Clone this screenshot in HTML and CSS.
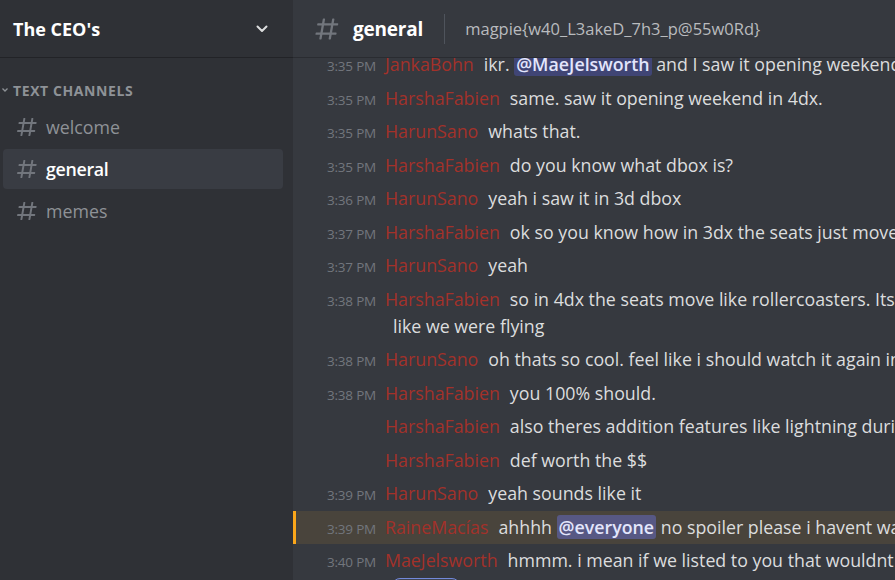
FILE: index.html
```html
<!DOCTYPE html>
<html>
<head>
<meta charset="utf-8">
<link rel="stylesheet" href="styles.css">
</head>
<body>
<div class="app">
  <aside class="sidebar">
    <div class="guild-header">
      <span class="guild-name">The CEO's</span>
      <svg class="chev" width="18" height="18" viewBox="0 0 18 18"><path d="M4.5 6.5 L9 11 L13.5 6.5" fill="none" stroke="#dcddde" stroke-width="2" stroke-linecap="round" stroke-linejoin="round"/></svg>
    </div>
    <div class="category">
      <svg class="cat-chev" width="8" height="8" viewBox="0 0 8 8"><path d="M1.5 2.5 L4 5 L6.5 2.5" fill="none" stroke="#8e9297" stroke-width="1.3"/></svg>
      <span>Text Channels</span>
    </div>
    <div class="channel"><svg class="hash" width="24" height="24" viewBox="0 0 24 24"><path fill="currentColor" fill-rule="evenodd" d="M5.88657 21C5.57547 21 5.3399 20.7189 5.39427 20.4126L6.00001 17H2.59511C2.28449 17 2.04905 16.7198 2.10259 16.4138L2.27759 15.4138C2.31946 15.1746 2.52722 15 2.77011 15H6.35001L7.41001 9H4.00511C3.69449 9 3.45905 8.71977 3.51259 8.41381L3.68759 7.41381C3.72946 7.17456 3.93722 7 4.18011 7H7.76001L8.39677 3.41262C8.43914 3.17391 8.64664 3 8.88907 3H9.87344C10.1845 3 10.4201 3.28107 10.3657 3.58738L9.76001 7H15.76L16.3968 3.41262C16.4391 3.17391 16.6466 3 16.8891 3H17.8734C18.1845 3 18.4201 3.28107 18.3657 3.58738L17.76 7H21.1649C21.4755 7 21.711 7.28023 21.6574 7.58619L21.4824 8.58619C21.4406 8.82544 21.2328 9 20.9899 9H17.41L16.35 15H19.7549C20.0655 15 20.301 15.2802 20.2474 15.5862L20.0724 16.5862C20.0306 16.8254 19.8228 17 19.5799 17H16L15.3632 20.5874C15.3209 20.8261 15.1134 21 14.8709 21H13.8866C13.5755 21 13.3399 20.7189 13.3943 20.4126L14 17H8.00001L7.36325 20.5874C7.32088 20.8261 7.11337 21 6.87094 21H5.88657ZM9.41045 9L8.35045 15H14.3504L15.4104 9H9.41045Z"/></svg><span>welcome</span></div>
    <div class="channel active"><svg class="hash" width="24" height="24" viewBox="0 0 24 24"><path fill="currentColor" fill-rule="evenodd" d="M5.88657 21C5.57547 21 5.3399 20.7189 5.39427 20.4126L6.00001 17H2.59511C2.28449 17 2.04905 16.7198 2.10259 16.4138L2.27759 15.4138C2.31946 15.1746 2.52722 15 2.77011 15H6.35001L7.41001 9H4.00511C3.69449 9 3.45905 8.71977 3.51259 8.41381L3.68759 7.41381C3.72946 7.17456 3.93722 7 4.18011 7H7.76001L8.39677 3.41262C8.43914 3.17391 8.64664 3 8.88907 3H9.87344C10.1845 3 10.4201 3.28107 10.3657 3.58738L9.76001 7H15.76L16.3968 3.41262C16.4391 3.17391 16.6466 3 16.8891 3H17.8734C18.1845 3 18.4201 3.28107 18.3657 3.58738L17.76 7H21.1649C21.4755 7 21.711 7.28023 21.6574 7.58619L21.4824 8.58619C21.4406 8.82544 21.2328 9 20.9899 9H17.41L16.35 15H19.7549C20.0655 15 20.301 15.2802 20.2474 15.5862L20.0724 16.5862C20.0306 16.8254 19.8228 17 19.5799 17H16L15.3632 20.5874C15.3209 20.8261 15.1134 21 14.8709 21H13.8866C13.5755 21 13.3399 20.7189 13.3943 20.4126L14 17H8.00001L7.36325 20.5874C7.32088 20.8261 7.11337 21 6.87094 21H5.88657ZM9.41045 9L8.35045 15H14.3504L15.4104 9H9.41045Z"/></svg><span>general</span></div>
    <div class="channel"><svg class="hash" width="24" height="24" viewBox="0 0 24 24"><path fill="currentColor" fill-rule="evenodd" d="M5.88657 21C5.57547 21 5.3399 20.7189 5.39427 20.4126L6.00001 17H2.59511C2.28449 17 2.04905 16.7198 2.10259 16.4138L2.27759 15.4138C2.31946 15.1746 2.52722 15 2.77011 15H6.35001L7.41001 9H4.00511C3.69449 9 3.45905 8.71977 3.51259 8.41381L3.68759 7.41381C3.72946 7.17456 3.93722 7 4.18011 7H7.76001L8.39677 3.41262C8.43914 3.17391 8.64664 3 8.88907 3H9.87344C10.1845 3 10.4201 3.28107 10.3657 3.58738L9.76001 7H15.76L16.3968 3.41262C16.4391 3.17391 16.6466 3 16.8891 3H17.8734C18.1845 3 18.4201 3.28107 18.3657 3.58738L17.76 7H21.1649C21.4755 7 21.711 7.28023 21.6574 7.58619L21.4824 8.58619C21.4406 8.82544 21.2328 9 20.9899 9H17.41L16.35 15H19.7549C20.0655 15 20.301 15.2802 20.2474 15.5862L20.0724 16.5862C20.0306 16.8254 19.8228 17 19.5799 17H16L15.3632 20.5874C15.3209 20.8261 15.1134 21 14.8709 21H13.8866C13.5755 21 13.3399 20.7189 13.3943 20.4126L14 17H8.00001L7.36325 20.5874C7.32088 20.8261 7.11337 21 6.87094 21H5.88657ZM9.41045 9L8.35045 15H14.3504L15.4104 9H9.41045Z"/></svg><span>memes</span></div>
  </aside>
  <main class="main">
    <header class="chat-header">
      <svg class="hash big" width="24" height="24" viewBox="0 0 24 24"><path fill="currentColor" fill-rule="evenodd" d="M5.88657 21C5.57547 21 5.3399 20.7189 5.39427 20.4126L6.00001 17H2.59511C2.28449 17 2.04905 16.7198 2.10259 16.4138L2.27759 15.4138C2.31946 15.1746 2.52722 15 2.77011 15H6.35001L7.41001 9H4.00511C3.69449 9 3.45905 8.71977 3.51259 8.41381L3.68759 7.41381C3.72946 7.17456 3.93722 7 4.18011 7H7.76001L8.39677 3.41262C8.43914 3.17391 8.64664 3 8.88907 3H9.87344C10.1845 3 10.4201 3.28107 10.3657 3.58738L9.76001 7H15.76L16.3968 3.41262C16.4391 3.17391 16.6466 3 16.8891 3H17.8734C18.1845 3 18.4201 3.28107 18.3657 3.58738L17.76 7H21.1649C21.4755 7 21.711 7.28023 21.6574 7.58619L21.4824 8.58619C21.4406 8.82544 21.2328 9 20.9899 9H17.41L16.35 15H19.7549C20.0655 15 20.301 15.2802 20.2474 15.5862L20.0724 16.5862C20.0306 16.8254 19.8228 17 19.5799 17H16L15.3632 20.5874C15.3209 20.8261 15.1134 21 14.8709 21H13.8866C13.5755 21 13.3399 20.7189 13.3943 20.4126L14 17H8.00001L7.36325 20.5874C7.32088 20.8261 7.11337 21 6.87094 21H5.88657ZM9.41045 9L8.35045 15H14.3504L15.4104 9H9.41045Z"/></svg>
      <span class="chan-title">general</span>
      <span class="divider"></span>
      <span class="topic">magpie{w40_L3akeD_7h3_p@55w0Rd}</span>
    </header>
    <div class="messages">
      <div class="msg"><span class="ts">3:35 PM</span><span class="name">JankaBohn</span><span class="text">ikr. <span class="mention">@MaeJelsworth</span> and I saw it opening weekend</span></div>
      <div class="msg"><span class="ts">3:35 PM</span><span class="name">HarshaFabien</span><span class="text">same. saw it opening weekend in 4dx.</span></div>
      <div class="msg"><span class="ts">3:35 PM</span><span class="name">HarunSano</span><span class="text">whats that.</span></div>
      <div class="msg"><span class="ts">3:35 PM</span><span class="name">HarshaFabien</span><span class="text">do you know what dbox is?</span></div>
      <div class="msg"><span class="ts">3:36 PM</span><span class="name">HarunSano</span><span class="text">yeah i saw it in 3d dbox</span></div>
      <div class="msg"><span class="ts">3:37 PM</span><span class="name">HarshaFabien</span><span class="text">ok so you know how in 3dx the seats just move</span></div>
      <div class="msg"><span class="ts">3:37 PM</span><span class="name">HarunSano</span><span class="text">yeah</span></div>
      <div class="msg"><span class="ts">3:38 PM</span><span class="name">HarshaFabien</span><span class="text">so in 4dx the seats move like rollercoasters. Its<br>like we were flying</span></div>
      <div class="msg"><span class="ts">3:38 PM</span><span class="name">HarunSano</span><span class="text">oh thats so cool. feel like i should watch it again in</span></div>
      <div class="msg"><span class="ts">3:38 PM</span><span class="name">HarshaFabien</span><span class="text">you 100% should.</span></div>
      <div class="msg"><span class="ts"></span><span class="name">HarshaFabien</span><span class="text">also theres addition features like lightning during</span></div>
      <div class="msg"><span class="ts"></span><span class="name">HarshaFabien</span><span class="text">def worth the $$</span></div>
      <div class="msg"><span class="ts">3:39 PM</span><span class="name">HarunSano</span><span class="text">yeah sounds like it</span></div>
      <div class="msg highlight"><span class="ts">3:39 PM</span><span class="name">RaineMacías</span><span class="text">ahhhh <span class="mention strong">@everyone</span> no spoiler please i havent wa</span></div>
      <div class="msg"><span class="ts">3:40 PM</span><span class="name">MaeJelsworth</span><span class="text">hmmm. i mean if we listed to you that wouldnt</span></div>
      <div class="reactions"><span class="reaction"></span></div>
    </div>
  </main>
</div>
</body>
</html>
```
FILE: styles.css
```css
* { box-sizing: border-box; }
html, body { margin: 0; padding: 0; }
body {
  width: 895px;
  height: 580px;
  overflow: hidden;
  background: #36393f;
  font-family: "Open Sans", "Noto Sans", sans-serif;
}
.app {
  display: flex;
  height: 580px;
}
.sidebar {
  width: 293px;
  flex: none;
  background: #2f3136;
  display: flex;
  flex-direction: column;
}
.guild-header {
  height: 58px;
  display: flex;
  align-items: center;
  padding: 0 22px 0 13px;
  border-bottom: 1px solid #222327;
}
.guild-name {
  flex: 1;
  color: #ffffff;
  font-size: 18px;
  font-weight: 700;
}
.chev { display: block; }
.category {
  display: flex;
  align-items: center;
  margin-top: 23px;
  height: 18px;
  padding-left: 1px;
  color: #8e9297;
  font-size: 14px;
  font-weight: 700;
  text-transform: uppercase;
  letter-spacing: 0.6px;
}
.cat-chev { margin-right: 4px; }
.channel {
  display: flex;
  align-items: center;
  height: 40px;
  margin: 0 10px 2px 3px;
  padding-left: 12px;
  border-radius: 4px;
  color: #8e9297;
  font-size: 17.8px;
}
.category + .channel { margin-top: 8px; }
.channel .hash {
  width: 24px;
  height: 24px;
  color: #72767d;
  margin-right: 7px;
}
.channel.active {
  background: #393c43;
  color: #ffffff;
  font-weight: 600;
  letter-spacing: -0.3px;
}
.main {
  flex: 1;
  min-width: 0;
  display: flex;
  flex-direction: column;
  overflow: hidden;
}
.chat-header {
  height: 58px;
  flex: none;
  display: flex;
  align-items: center;
  padding-left: 20px;
  border-bottom: 1px solid #2a2c31;
  position: relative;
  z-index: 1;
  background: #36393f;
}
.chat-header .hash {
  width: 28px;
  height: 28px;
  color: #72767d;
  margin-right: 12px;
}
.chan-title {
  color: #ffffff;
  font-size: 19px;
  font-weight: 700;
  letter-spacing: -0.2px;
}
.divider {
  width: 1px;
  height: 30px;
  background: #4f545c;
  margin: 0 20px 0 21px;
}
.topic {
  color: #b9bbbe;
  font-size: 16.5px;
  white-space: nowrap;
}
.messages {
  margin-top: -10px;
  display: flex;
  flex-direction: column;
}
.msg {
  padding: 3px 0 3.5px 100px;
  text-indent: -72px;
  line-height: 27px;
  white-space: nowrap;
  font-size: 17.8px;
  color: #dcddde;
}
.ts {
  display: inline-block;
  width: 55px;
  line-height: 1;
  text-indent: 0;
  text-align: right;
  font-size: 13.5px;
  letter-spacing: -0.2px;
  color: #72767d;
  margin-right: 9px;
}
.name {
  color: #a3312a;
  margin-right: 10px;
}
.mention {
  background: rgba(88,101,242,0.3);
  color: #e3e6fc;
  border-radius: 3px;
  padding: 0 2px;
  font-weight: 600;
}
.mention.strong {
  background: rgba(104,114,220,0.45);
}
.highlight {
  background: #49443c;
  border-left: 3px solid #faa61a;
  padding-left: 97px;
}
.reactions {
  padding-left: 99px;
  height: 20px;
}
.reaction {
  display: block;
  width: 68px;
  height: 22px;
  border: 1.5px solid #7289da;
  border-radius: 8px;
  background: rgba(114,137,218,0.15);
}
```
